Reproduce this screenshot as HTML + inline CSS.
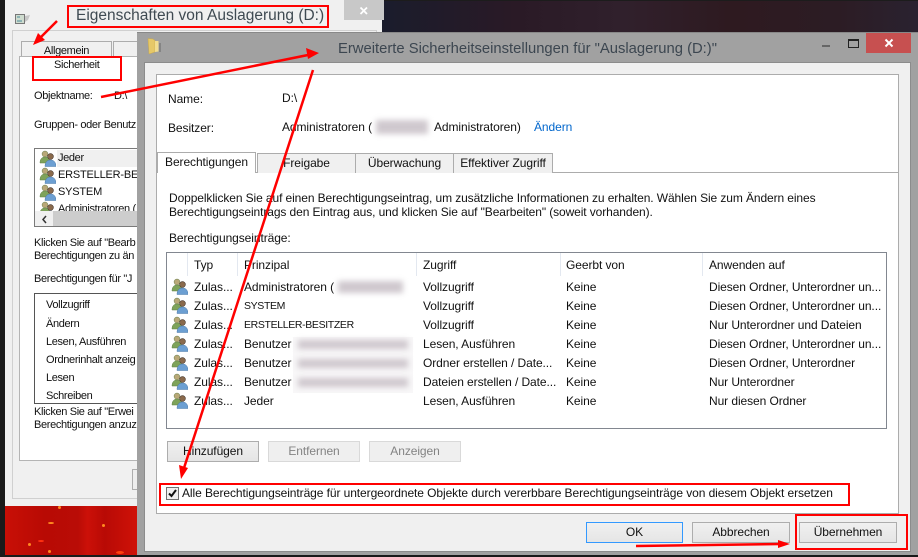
<!DOCTYPE html>
<html><head><meta charset="utf-8"><style>
html,body{margin:0;padding:0}
body{width:918px;height:557px;overflow:hidden;position:relative;background:#1a1a1a;font-family:"Liberation Sans",sans-serif;font-size:12px;color:#111;letter-spacing:-.08px}
.a{position:absolute}
.t{position:absolute;white-space:nowrap;line-height:15px}
.l{font-size:11px;letter-spacing:-.35px}
.cap{font-size:10.500px;letter-spacing:-.35px}
.tab{position:absolute;background:#f0f0f0;border:1px solid #acacac;border-bottom:none;box-sizing:border-box;text-align:center;line-height:19px}
.btn{position:absolute;box-sizing:border-box;border:1px solid #adadad;background:linear-gradient(#f0f0f0,#e5e5e5);text-align:center;line-height:19px;height:21px}
.dis{border-color:#d9d9d9;background:#efefef;color:#838383}
.r{position:absolute;border:2px solid #f00;box-sizing:border-box}
.blur{position:absolute;background:#cfc8ce;filter:blur(3px)}
.ic{position:absolute;width:17px;height:17px}
.hd{position:absolute;top:253px;height:23px;width:1px;background:#e3e8f0}
.sp{position:absolute;width:3px;height:3px;background:#ff8a20;border-radius:50%}
</style></head><body>
<svg width="0" height="0" style="position:absolute"><defs>
<g id="u"><circle cx="6" cy="4" r="2.900" fill="#b9a878" stroke="#7c8a58" stroke-width=".6"/><path d="M1 13c0-4 2-6 5-6s5 2 5 6z" fill="#7ea35a" stroke="#5f7f45" stroke-width=".5"/><circle cx="11.500" cy="6.500" r="2.900" fill="#8a6a4c" stroke="#4a3a30" stroke-width=".6"/><path d="M6 16.500c0-4 2-6.500 5.500-6.500s5.500 2.500 5.500 6.500z" fill="#6c9fd2" stroke="#4b78a8" stroke-width=".5"/></g>
</defs></svg>

<!-- backgrounds -->
<div class="a" style="left:382px;top:0;width:536px;height:32px;background:linear-gradient(90deg,#1a1c2c,#2a1a26 25%,#30202c 45%,#2e1a20 65%,#2c1c24 85%,#2a2230);border-top:1px solid #1c1c1c;box-sizing:border-box"></div>
<div class="a" style="left:5px;top:506px;width:133px;height:49px;background:linear-gradient(90deg,#c80f06,#b80a04 30%,#b90c06 55%,#cc1008 62%,#b80a05 75%,#d01208)"></div>
<div class="sp" style="left:28px;top:543px"></div>
<div class="sp" style="left:48px;top:522px;width:6px;height:2px"></div>
<div class="sp" style="left:102px;top:524px"></div>
<div class="sp" style="left:48px;top:550px"></div>
<div class="sp" style="left:58px;top:506px"></div>
<div class="sp" style="left:38px;top:540px;width:6px;height:2px;background:#ff3010"></div>
<div class="sp" style="left:116px;top:551px;width:8px;height:3px;background:#ff4010"></div>
<div class="a" style="left:0;top:555px;width:918px;height:2px;background:#1a1a1a"></div>

<!-- back window -->
<div class="a" style="left:5px;top:0;width:377px;height:506px;background:#f0f0f0"></div>
<div class="a" style="left:12px;top:30px;width:365px;height:469px;border:1px solid #d0d0d0;box-sizing:border-box"></div>
<div class="a" style="left:344px;top:0;width:40px;height:20px;background:#c8c8c8"></div>
<svg class="a" style="left:359px;top:6px" width="10" height="10"><path d="M1.500 1.500l6.500 6.500M8 1.500l-6.500 6.500" stroke="#fff" stroke-width="1.800"/></svg>
<svg class="a" style="left:15px;top:13px" width="16" height="12"><rect x="0.500" y="1.500" width="9" height="9" fill="#cfdccf" stroke="#777"/><path d="M2 4h3M2 8h5" stroke="#4b8a9a"/><path d="M10 3l5-1-2 5-3 2z" fill="#c8c8c8"/></svg>
<div class="t" style="left:76px;top:6px;font-size:15.500px;line-height:20px;color:#3f4a52;letter-spacing:0">Eigenschaften von Auslagerung (D:)</div>
<div class="tab" style="left:21px;top:41px;width:91px;height:16px;line-height:17px"><span class="l">Allgemein</span></div>
<div class="tab" style="left:113px;top:41px;width:30px;height:16px"></div>
<div class="a" style="left:19px;top:56px;width:130px;height:405px;background:#fff;border:1px solid #b4b4b4;box-sizing:border-box"></div>
<div class="t l" style="left:54px;top:58px">Sicherheit</div>
<div class="t l" style="left:34px;top:89px">Objektname:</div>
<div class="t l" style="left:114px;top:89px">D:\</div>
<div class="t l" style="left:34px;top:118px">Gruppen- oder Benutz</div>
<div class="a" style="left:34px;top:148px;width:110px;height:79px;background:#fff;border:1px solid #7a7a7a;box-sizing:border-box;overflow:hidden">
 <div class="a" style="left:22px;top:1px;width:90px;height:17px;background:#f0f0f0"></div>
 <svg class="ic" style="left:4px;top:1px"><use href="#u"/></svg><div class="t l" style="left:23px;top:2px">Jeder</div>
 <svg class="ic" style="left:4px;top:18px"><use href="#u"/></svg><div class="t l" style="left:23px;top:19px;letter-spacing:-.2px">ERSTELLER-BE</div>
 <svg class="ic" style="left:4px;top:35px"><use href="#u"/></svg><div class="t l" style="left:23px;top:36px;letter-spacing:-.2px">SYSTEM</div>
 <svg class="ic" style="left:4px;top:52px"><use href="#u"/></svg><div class="t l" style="left:23px;top:53px">Administratoren (</div>
 <div class="a" style="left:0;top:62px;width:110px;height:16px;background:#f0f0f0"></div>
 <div class="a" style="left:18px;top:62px;width:92px;height:16px;background:#cdcdcd"></div>
 <svg class="a" style="left:6px;top:66px" width="7" height="9"><path d="M5 1L2 4.500 5 8" fill="none" stroke="#333" stroke-width="1.500"/></svg>
</div>
<div class="t l" style="left:34px;top:236px">Klicken Sie auf "Bearb</div>
<div class="t l" style="left:34px;top:249px">Berechtigungen zu än</div>
<div class="t l" style="left:34px;top:272px">Berechtigungen für "J</div>
<div class="a" style="left:34px;top:293px;width:110px;height:111px;border:1px solid #555;box-sizing:border-box"></div>
<div class="t l" style="left:46px;top:298px">Vollzugriff</div>
<div class="t l" style="left:46px;top:317px">Ändern</div>
<div class="t l" style="left:46px;top:335px">Lesen, Ausführen</div>
<div class="t l" style="left:46px;top:353px">Ordnerinhalt anzeig</div>
<div class="t l" style="left:46px;top:371px">Lesen</div>
<div class="t l" style="left:46px;top:389px">Schreiben</div>
<div class="t l" style="left:34px;top:405px">Klicken Sie auf "Erwei</div>
<div class="t l" style="left:34px;top:418px">Berechtigungen anzuz</div>
<div class="a" style="left:132px;top:469px;width:10px;height:21px;border:1px solid #adadad;background:#eee;box-sizing:border-box"></div>

<!-- front window -->
<div class="a" style="left:137px;top:32px;width:781px;height:523px;background:#a1a1a1;border-top:1px solid #888;box-sizing:border-box"></div>
<div class="a" style="left:144px;top:62px;width:767px;height:490px;background:#f0f0f0;border:1px solid #8c8c8c;box-sizing:border-box"></div>
<svg class="a" style="left:147px;top:37px" width="15" height="18"><path d="M1 1.500l5 .5 2 1.500V15l-6 2z" fill="#e6c868" stroke="#c9a94e" stroke-width=".5"/><path d="M8 4h3.500v10.500L8 15z" fill="#f2dd90"/><path d="M12 6h2v9h-2z" fill="#858585"/></svg>
<div class="t" style="left:338px;top:39px;font-size:14.800px;line-height:20px;color:#3c4650;letter-spacing:0">Erweiterte Sicherheitseinstellungen für "Auslagerung (D:)"</div>
<div class="a" style="left:822px;top:45px;width:8px;height:2px;background:#666"></div>
<div class="a" style="left:848px;top:39px;width:9px;height:6px;border:1px solid #222;border-top-width:2px;box-sizing:content-box"></div>
<div class="a" style="left:866px;top:33px;width:45px;height:20px;background:#c75050"></div>
<svg class="a" style="left:884px;top:38px" width="10" height="10"><path d="M1.500 1.500l7 7M8.500 1.500l-7 7" stroke="#fff" stroke-width="2"/></svg>

<div class="a" style="left:156px;top:74px;width:743px;height:440px;background:#fff;border:1px solid #acacac;box-sizing:border-box"></div>
<div class="t" style="left:168px;top:92px">Name:</div>
<div class="t" style="left:282px;top:91px">D:\</div>
<div class="t" style="left:168px;top:121px">Besitzer:</div>
<div class="t" style="left:282px;top:120px">Administratoren (</div>
<div class="blur" style="left:376px;top:120px;width:52px;height:14px"></div>
<div class="t" style="left:434px;top:120px">Administratoren)</div>
<div class="t" style="left:534px;top:120px;color:#0066cc">Ändern</div>

<div class="a" style="left:157px;top:172px;width:741px;height:1px;background:#acacac"></div>
<div class="tab" style="left:257px;top:153px;width:99px;height:20px;">Freigabe</div>
<div class="tab" style="left:355px;top:153px;width:99px;height:20px">Überwachung</div>
<div class="tab" style="left:453px;top:153px;width:100px;height:20px">Effektiver Zugriff</div>
<div class="tab" style="left:157px;top:152px;width:99px;height:21px;background:#fff;z-index:1">Berechtigungen</div>

<div class="t" style="left:169px;top:191px;letter-spacing:-.1px">Doppelklicken Sie auf einen Berechtigungseintrag, um zusätzliche Informationen zu erhalten. Wählen Sie zum Ändern eines</div>
<div class="t" style="left:169px;top:205px;letter-spacing:-.1px">Berechtigungseintrags den Eintrag aus, und klicken Sie auf "Bearbeiten" (soweit vorhanden).</div>
<div class="t" style="left:169px;top:231px">Berechtigungseinträge:</div>

<div class="a" style="left:166px;top:252px;width:721px;height:177px;background:#fff;border:1px solid #828790;box-sizing:border-box"></div>
<div class="hd" style="left:187px"></div><div class="hd" style="left:237px"></div><div class="hd" style="left:416px"></div><div class="hd" style="left:560px"></div><div class="hd" style="left:702px"></div>
<div class="t" style="left:194px;top:258px">Typ</div><div class="t" style="left:244px;top:258px">Prinzipal</div><div class="t" style="left:423px;top:258px">Zugriff</div><div class="t" style="left:566px;top:258px">Geerbt von</div><div class="t" style="left:709px;top:258px">Anwenden auf</div>

<svg class="ic" style="left:171px;top:278px"><use href="#u"/></svg>
<svg class="ic" style="left:171px;top:297px"><use href="#u"/></svg>
<svg class="ic" style="left:171px;top:316px"><use href="#u"/></svg>
<svg class="ic" style="left:171px;top:335px"><use href="#u"/></svg>
<svg class="ic" style="left:171px;top:354px"><use href="#u"/></svg>
<svg class="ic" style="left:171px;top:373px"><use href="#u"/></svg>
<svg class="ic" style="left:171px;top:392px"><use href="#u"/></svg>

<div class="t" style="left:194px;top:280px">Zulas...</div><div class="t" style="left:244px;top:280px">Administratoren (</div><div class="t" style="left:423px;top:280px">Vollzugriff</div><div class="t" style="left:566px;top:280px">Keine</div><div class="t" style="left:709px;top:280px">Diesen Ordner, Unterordner un...</div>
<div class="t" style="left:194px;top:299px">Zulas...</div><div class="t cap" style="left:244px;top:299px">SYSTEM</div><div class="t" style="left:423px;top:299px">Vollzugriff</div><div class="t" style="left:566px;top:299px">Keine</div><div class="t" style="left:709px;top:299px">Diesen Ordner, Unterordner un...</div>
<div class="t" style="left:194px;top:318px">Zulas...</div><div class="t cap" style="left:244px;top:318px">ERSTELLER-BESITZER</div><div class="t" style="left:423px;top:318px">Vollzugriff</div><div class="t" style="left:566px;top:318px">Keine</div><div class="t" style="left:709px;top:318px">Nur Unterordner und Dateien</div>
<div class="t" style="left:194px;top:337px">Zulas...</div><div class="t" style="left:244px;top:337px">Benutzer</div><div class="t" style="left:423px;top:337px">Lesen, Ausführen</div><div class="t" style="left:566px;top:337px">Keine</div><div class="t" style="left:709px;top:337px">Diesen Ordner, Unterordner un...</div>
<div class="t" style="left:194px;top:356px">Zulas...</div><div class="t" style="left:244px;top:356px">Benutzer</div><div class="t" style="left:423px;top:356px">Ordner erstellen / Date...</div><div class="t" style="left:566px;top:356px">Keine</div><div class="t" style="left:709px;top:356px">Diesen Ordner, Unterordner</div>
<div class="t" style="left:194px;top:375px">Zulas...</div><div class="t" style="left:244px;top:375px">Benutzer</div><div class="t" style="left:423px;top:375px">Dateien erstellen / Date...</div><div class="t" style="left:566px;top:375px">Keine</div><div class="t" style="left:709px;top:375px">Nur Unterordner</div>
<div class="t" style="left:194px;top:394px">Zulas...</div><div class="t" style="left:244px;top:394px">Jeder</div><div class="t" style="left:423px;top:394px">Lesen, Ausführen</div><div class="t" style="left:566px;top:394px">Keine</div><div class="t" style="left:709px;top:394px">Nur diesen Ordner</div>

<div class="a" style="left:335px;top:280px;width:75px;height:15px;background:#fff"></div>
<div class="blur" style="left:338px;top:281px;width:65px;height:12px"></div>
<div class="a" style="left:293px;top:337px;width:120px;height:56px;background:#f8f7f8"></div>
<div class="blur" style="left:298px;top:340px;width:110px;height:9px"></div>
<div class="blur" style="left:298px;top:359px;width:110px;height:9px"></div>
<div class="blur" style="left:298px;top:378px;width:110px;height:9px"></div>

<div class="btn" style="left:167px;top:441px;width:92px">Hinzufügen</div>
<div class="btn dis" style="left:268px;top:441px;width:92px">Entfernen</div>
<div class="btn dis" style="left:369px;top:441px;width:92px">Anzeigen</div>

<div class="a" style="left:166px;top:487px;width:13px;height:13px;background:#f0f0f0;border:1px solid #707070;box-sizing:border-box"></div>
<svg class="a" style="left:167px;top:488px" width="11" height="11"><path d="M2 5.500l2.500 2.500L9 2" fill="none" stroke="#111" stroke-width="2"/></svg>
<div class="t" style="left:182px;top:486px">Alle Berechtigungseinträge für untergeordnete Objekte durch vererbbare Berechtigungseinträge von diesem Objekt ersetzen</div>

<div class="btn" style="left:586px;top:522px;width:97px;border-color:#3399ff">OK</div>
<div class="btn" style="left:692px;top:522px;width:98px">Abbrechen</div>
<div class="btn" style="left:799px;top:522px;width:98px">Übernehmen</div>

<!-- red annotations -->
<div class="r" style="left:67px;top:5px;width:262px;height:23px"></div>
<div class="r" style="left:32px;top:56px;width:90px;height:25px"></div>
<div class="r" style="left:159px;top:483px;width:691px;height:23px"></div>
<div class="r" style="left:795px;top:514px;width:113px;height:36px"></div>
<svg class="a" style="left:0;top:0;z-index:5" width="918" height="557">
 <path d="M57 21L40 38" stroke="#f00" stroke-width="2.500"/><path d="M33 45l5-12 7 7z" fill="#f00"/>
 <path d="M101 97L308 55" stroke="#f00" stroke-width="2.500"/><path d="M319 53l-13-5 2 11z" fill="#f00"/>
 <path d="M313 70L184 468" stroke="#f00" stroke-width="2.500"/><path d="M181 479l-2-14 9 3z" fill="#f00"/>
 <path d="M636 546L780 544" stroke="#f00" stroke-width="2.500"/><path d="M790 544l-12-4v8z" fill="#f00"/>
</svg>
</body></html>
